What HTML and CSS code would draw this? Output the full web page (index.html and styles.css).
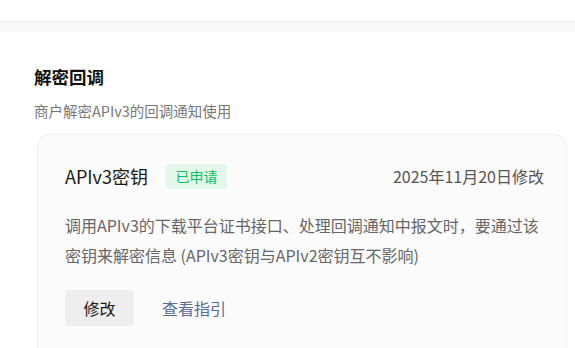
FILE: index.html
```html
<!doctype html>
<html lang="zh-CN">
  <head>
    <meta charset="UTF-8" />
    <meta name="viewport" content="width=device-width, initial-scale=1.0" />
    <title>解密回调</title>
    <link rel="stylesheet" href="styles.css">
  </head>
  <body>
    <div class="top-strip"></div>
    <div class="section">
      <h2 class="section-title">解密回调</h2>
      <p class="section-desc">商户解密APIv3的回调通知使用</p>
      <div class="card">
        <div class="card-head">
          <div class="card-name">
            <span class="key-name">APIv3密钥</span>
            <span class="tag">已申请</span>
          </div>
          <span class="modified">2025年11月20日修改</span>
        </div>
        <p class="card-text">调用APIv3的下载平台证书接口、处理回调通知中报文时，要通过该密钥来解密信息 (APIv3密钥与APIv2密钥互不影响)</p>
        <div class="actions">
          <button class="btn">修改</button>
          <a class="link" href="#">查看指引</a>
        </div>
      </div>
    </div>
  </body>
</html>
```

FILE: styles.css
```css
body {
  margin: 0;
  font-family: "Noto Sans CJK SC", "Noto Sans", sans-serif;
  background: #fff;
  color: #1a1a1a;
}
.top-strip {
  margin-top: 21px;
  height: 10px;
  background: #f8f8f8;
  border-top: 1px solid #f0f0f0;
}
.section {
  padding: 32px 8px 0 34px;
}
.section-title {
  margin: 0;
  font-size: 17.5px;
  line-height: 26px;
  font-weight: bold;
  color: #111;
}
.section-desc {
  margin: 11px 0 0;
  font-size: 14.5px;
  line-height: 20px;
  color: #777;
}
.card {
  margin: 13px 0 0 3px;
  padding: 28px 22px 40px 27px;
  background: #fbfbfb;
  border: 1px solid #f0f0f0;
  border-radius: 12px;
}
.card-head {
  display: flex;
  justify-content: space-between;
  align-items: center;
}
.card-name {
  display: flex;
  align-items: center;
  gap: 18px;
}
.key-name {
  font-size: 18px;
  color: #1a1a1a;
}
.tag {
  width: 61px;
  height: 25px;
  line-height: 25px;
  text-align: center;
  font-size: 14px;
  color: #07c160;
  background: #e3f6ea;
  border-radius: 4px;
}
.modified {
  font-size: 16px;
  color: #555;
}
.card-text {
  margin: 21px 0 0;
  font-size: 16px;
  line-height: 30px;
  color: #666;
}
.actions {
  display: flex;
  align-items: center;
  gap: 28px;
  margin-top: 20px;
}
.btn {
  width: 69px;
  height: 36px;
  border: none;
  border-radius: 4px;
  background: #eeeeee;
  font-family: inherit;
  font-size: 16px;
  color: #1a1a1a;
}
.link {
  font-size: 16px;
  color: #576b95;
  text-decoration: none;
}
```
